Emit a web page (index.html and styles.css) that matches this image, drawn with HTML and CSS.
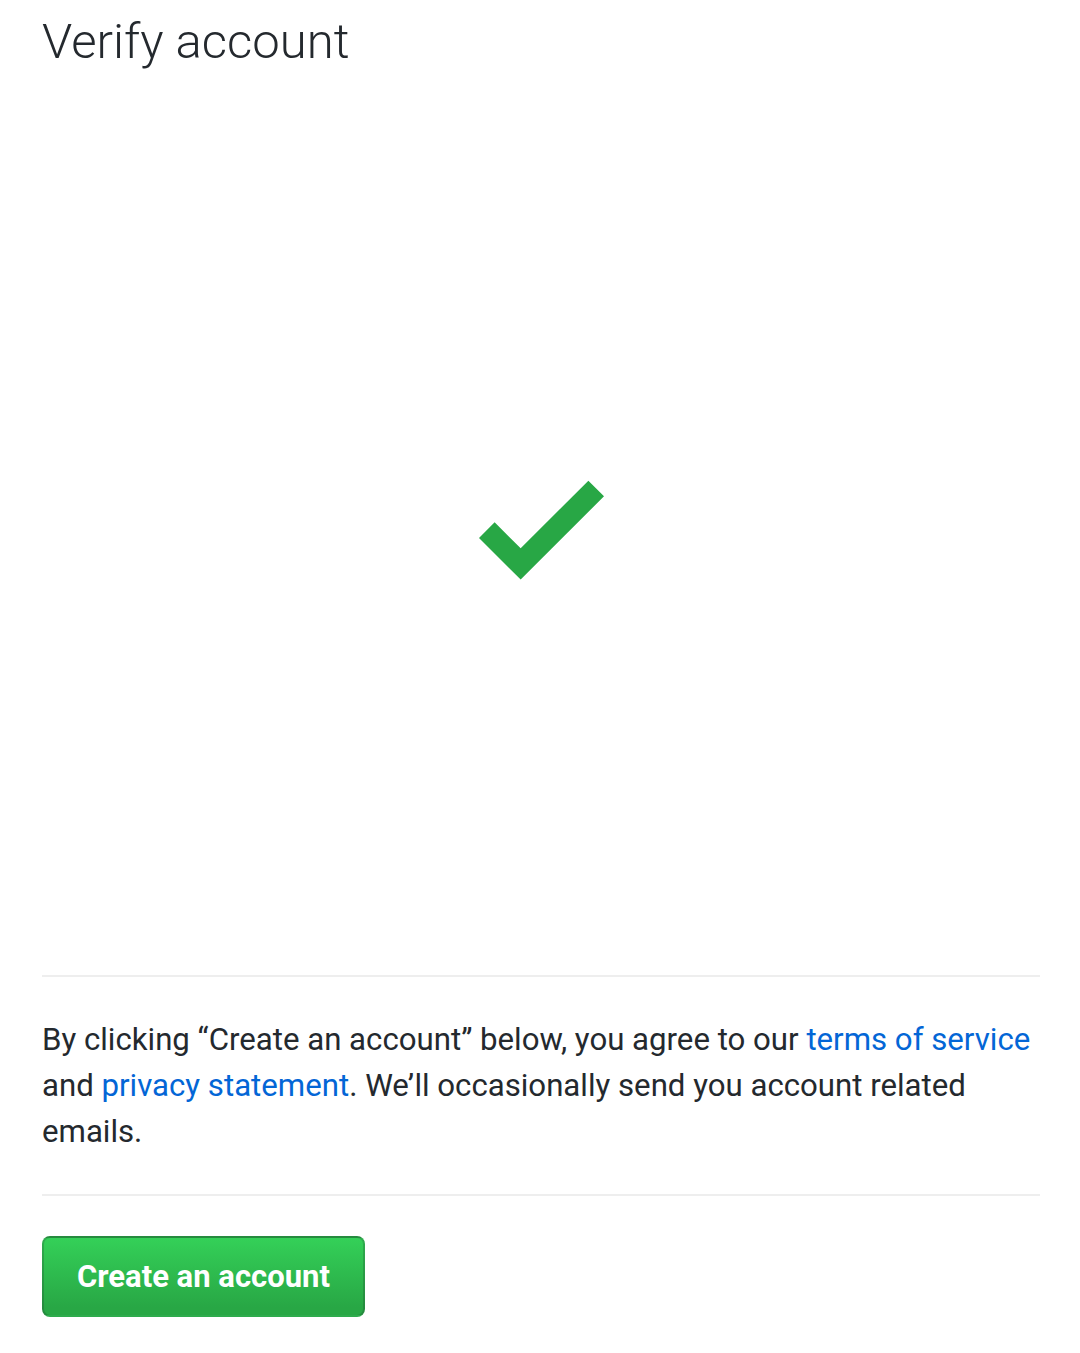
FILE: index.html
```html
<!DOCTYPE html>
<html lang="en">
<head>
<meta charset="utf-8">
<title>Verify account</title>
<link rel="stylesheet" href="styles.css">
</head>
<body>
<main class="page">
  <h1 class="title">Verify account</h1>
  <section class="check-area">
    <svg class="check" viewBox="0 0 12 16" width="125" height="167" aria-hidden="true">
      <path d="M12 5l-8 8-4-4 1.5-1.5L4 10l6.5-6.5L12 5z" fill="#28a745"/>
    </svg>
  </section>
  <div class="divider"></div>
  <p class="legal">By clicking “Create an account” below, you agree to our <a href="#">terms of service</a> and <a href="#">privacy statement</a>. We’ll occasionally send you account related emails.</p>
  <div class="divider"></div>
  <div class="actions">
    <button class="btn-primary" type="button">Create an account</button>
  </div>
</main>
</body>
</html>
```

FILE: styles.css
```css
html, body {
  margin: 0;
  padding: 0;
  background: #ffffff;
}

body {
  font-family: Roboto, "Noto Sans", "Liberation Sans", sans-serif;
  color: #24292e;
}

.page {
  padding: 12px 40px 0 42px;
}

.title {
  margin: 0;
  font-size: 49px;
  font-weight: 300;
  line-height: 60px;
  color: #24292e;
}

.check-area {
  height: 895px;
  padding-top: 8px;
  display: flex;
  align-items: center;
  justify-content: center;
}

.check {
  display: block;
}

.divider {
  height: 2px;
  background: #eeeeee;
}

.legal {
  margin: 40px 0 39px;
  font-size: 31.2px;
  line-height: 46px;
  color: #24292e;
}

.legal a {
  color: #0366d6;
  text-decoration: none;
}

.actions {
  padding-top: 40px;
}

.btn-primary {
  height: 81px;
  padding: 0 33px;
  border: 2px solid rgba(27, 31, 35, 0.2);
  border-radius: 8px;
  background: linear-gradient(#34d058, #28a745 90%);
  color: #ffffff;
  font-family: Roboto, "Noto Sans", "Liberation Sans", sans-serif;
  font-size: 31px;
  font-weight: 700;
  cursor: pointer;
}
```
